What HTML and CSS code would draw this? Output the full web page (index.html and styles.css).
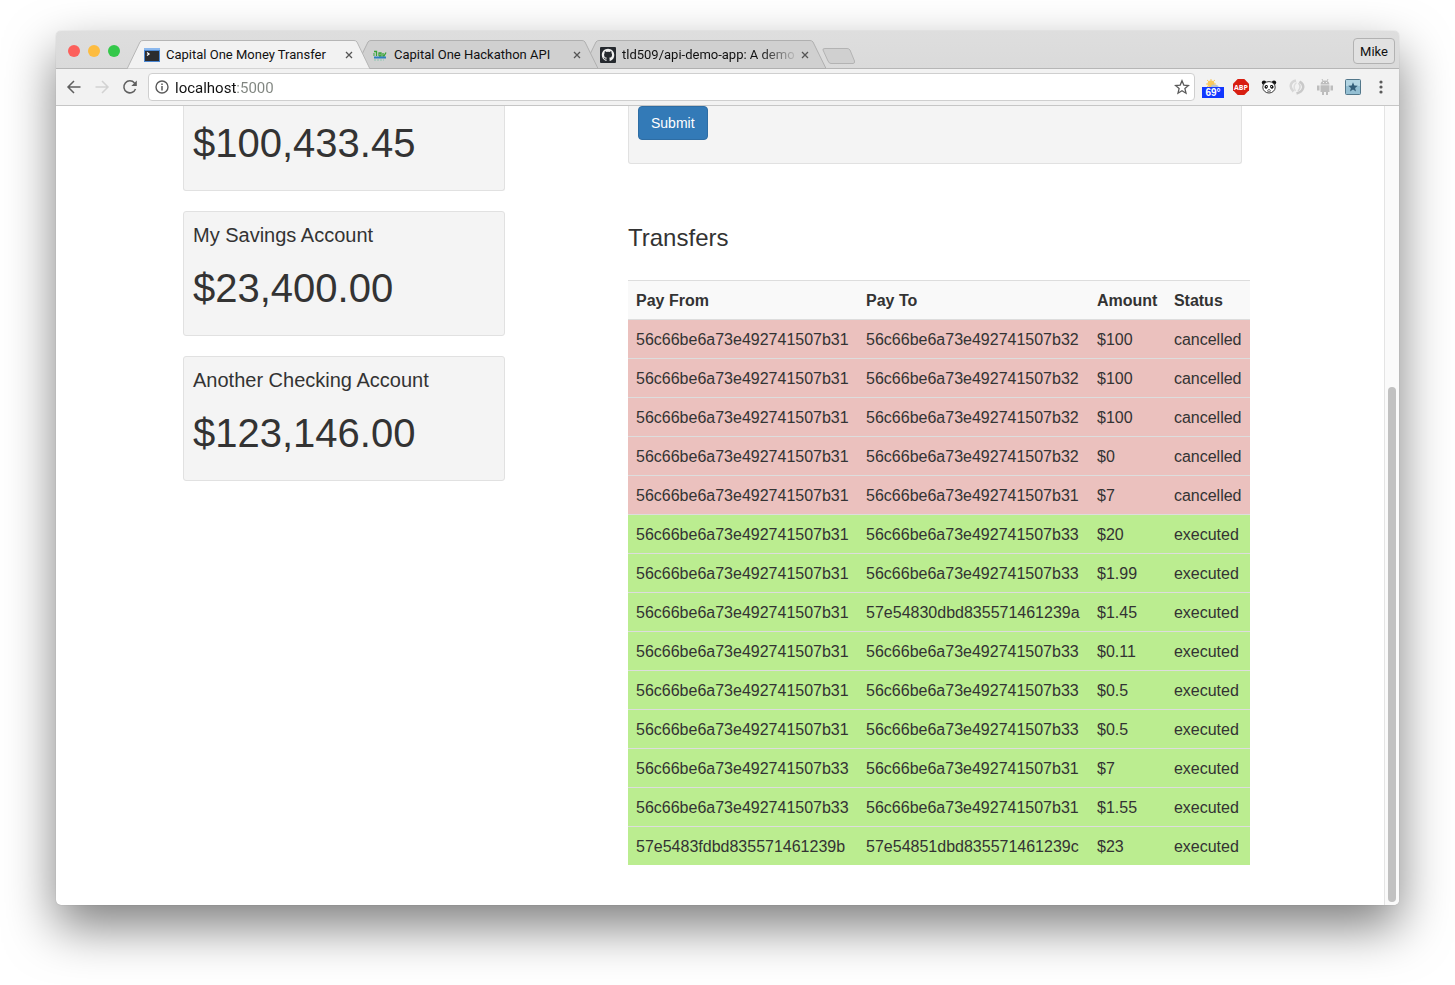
FILE: index.html
```html
<!DOCTYPE html>
<html lang="en">
<head>
<meta charset="utf-8">
<title>Capital One Money Transfer</title>
<link rel="stylesheet" href="styles.css">
</head>
<body>
<div class="window">
  <header class="tabstrip">
    <div class="lights">
      <button class="light light-close" aria-label="Close"></button>
      <button class="light light-min" aria-label="Minimize"></button>
      <button class="light light-max" aria-label="Zoom"></button>
    </div>
    <nav class="tabs">
      <div class="tab tab-active">
        <svg class="tab-shape" viewBox="0 0 243 29" preserveAspectRatio="none"><path d="M0 29L13 2Q14 .5 16 .5H227Q229 .5 230 2L243 29Z"/></svg>
        <div class="tab-body">
          <svg class="favicon" viewBox="0 0 16 16"><rect y="1" width="16" height="14" fill="#4b87d2"/><rect y="1" width="16" height="2" fill="#8bb8ee"/><rect x="1" y="4" width="14" height="10" fill="#2b2c30"/><path d="M3 5.500l2 1.500-2 1.500" fill="none" stroke="#fff" stroke-width="1.300"/></svg>
          <a class="tab-title" href="#">Capital One Money Transfer</a>
          <button class="tab-close" aria-label="Close tab"><svg viewBox="0 0 8 8"><path d="M1 1l6 6M7 1L1 7"/></svg></button>
        </div>
      </div>
      <div class="tab tab-second">
        <svg class="tab-shape" viewBox="0 0 243 29" preserveAspectRatio="none"><path d="M0 28.500L13 2Q14 .5 16 .5H227Q229 .5 230 2L243 28.500Z"/></svg>
        <div class="tab-body">
          <svg class="favicon" viewBox="0 0 16 16"><path d="M2 4.500h2.500V9M7 9V6h2v3H7M11 6v3h1l2-3.500" fill="none" stroke="#36a336" stroke-width="1.300"/><path d="M2 6v3" stroke="#36a336"/><path d="M2 10.500h12" stroke="#2e7fc0" stroke-width="1.800"/><path d="M2 13h10" stroke="#8dc6b0" stroke-dasharray="2 1"/></svg>
          <a class="tab-title" href="#">Capital One Hackathon API</a>
          <button class="tab-close" aria-label="Close tab"><svg viewBox="0 0 8 8"><path d="M1 1l6 6M7 1L1 7"/></svg></button>
        </div>
      </div>
      <div class="tab">
        <svg class="tab-shape" viewBox="0 0 243 29" preserveAspectRatio="none"><path d="M0 28.500L13 2Q14 .5 16 .5H227Q229 .5 230 2L243 28.500Z"/></svg>
        <div class="tab-body">
          <svg class="favicon" viewBox="0 0 16 16"><rect width="16" height="16" rx="1" fill="#25292e"/><path transform="translate(1.800 1.800) scale(.78)" fill="#eee" d="M8 0C3.580 0 0 3.580 0 8c0 3.540 2.290 6.530 5.470 7.590.4.070.550-.170.550-.380v-1.490c-2.010.370-2.530-.490-2.690-.940-.090-.230-.480-.940-.820-1.130-.280-.150-.680-.520-.010-.530.630-.010 1.080.580 1.230.820.720 1.210 1.870.870 2.330.660.070-.520.280-.870.510-1.070-1.780-.200-3.640-.890-3.640-3.950 0-.870.310-1.590.820-2.150-.080-.200-.360-1.020.080-2.120 0 0 .670-.210 2.200.820a7.400 7.400 0 0 1 4 0c1.530-1.040 2.200-.820 2.200-.820.440 1.100.160 1.920.080 2.120.510.560.820 1.270.820 2.150 0 3.070-1.870 3.750-3.650 3.950.290.250.540.730.540 1.480v2.190c0 .210.150.460.550.380A8 8 0 0 0 16 8c0-4.420-3.580-8-8-8z"/></svg>
          <a class="tab-title tab-title-fade" href="#">tld509/api-demo-app: A demo</a>
          <button class="tab-close" aria-label="Close tab"><svg viewBox="0 0 8 8"><path d="M1 1l6 6M7 1L1 7"/></svg></button>
        </div>
      </div>
      <button class="new-tab" aria-label="New tab"><svg viewBox="0 0 34 16"><path d="M3 .5H25Q27 .5 28 2L32.500 13Q33 15.500 31 15.500H9Q7 15.500 6 13L1 2Q.5 .5 3 .5Z" fill="#d0d0d0" stroke="#b3b3b3"/></svg></button>
    </nav>
    <button class="profile">Mike</button>
  </header>

  <div class="toolbar">
    <div class="nav-buttons">
      <button class="icon-btn" aria-label="Back"><svg viewBox="0 0 16 16"><path d="M14.500 8H2M8 2L2 8l6 6" fill="none" stroke="#5f5f5f" stroke-width="1.500"/></svg></button>
      <button class="icon-btn" aria-label="Forward" disabled><svg viewBox="0 0 16 16"><path d="M1.500 8H14M8 2l6 6-6 6" fill="none" stroke="#d2d2d2" stroke-width="1.500"/></svg></button>
      <button class="icon-btn" aria-label="Reload"><svg viewBox="0 0 16 16"><path d="M13.500 10A6 6 0 1 1 12.500 4" fill="none" stroke="#5f5f5f" stroke-width="1.500"/><path d="M14.800 1.500v5.500H9.300z" fill="#5f5f5f"/></svg></button>
    </div>
    <div class="address">
      <svg class="info" viewBox="0 0 14 14"><circle cx="7" cy="7" r="6" fill="none" stroke="#5a5a5a" stroke-width="1.400"/><path d="M7 6v4.500M7 3.400v1.500" stroke="#5a5a5a" stroke-width="1.500"/></svg>
      <input class="url" type="text" aria-label="Address" value="localhost:5000">
      <button class="icon-btn" aria-label="Bookmark"><svg viewBox="0 0 16 16"><path d="M8 1.800l1.800 4.300 4.700.4-3.600 3.100 1.100 4.600L8 11.700l-4 2.500 1.100-4.600L1.500 6.500l4.700-.4z" fill="none" stroke="#5a5a5a" stroke-width="1.300"/></svg></button>
    </div>
    <div class="extensions">
      <button class="icon-btn weather" aria-label="Weather"><svg viewBox="0 0 22 9"><circle cx="9" cy="6" r="3.500" fill="#f9c95c"/><path d="M9 1v8M4 6h10M5 2l8 7M13 2L5 9" stroke="#f9c95c"/><path d="M9 9c0-3 3-3 4-2 2-1 3 1 4 2z" fill="#b9c4cc"/></svg><span class="badge">69°</span></button>
      <button class="icon-btn" aria-label="Adblock Plus"><svg viewBox="0 0 16 16"><path d="M4.700 0h6.600L16 4.700v6.600L11.300 16H4.700L0 11.300V4.700z" fill="#d81e11"/><text class="abp" x="8" y="11" text-anchor="middle">ABP</text></svg></button>
      <button class="icon-btn" aria-label="Panda"><svg viewBox="0 0 16 16"><circle cx="3" cy="3.600" r="2.200" fill="#111"/><circle cx="13" cy="3.600" r="2.200" fill="#111"/><ellipse cx="8" cy="8.300" rx="6.200" ry="5.700" fill="#fff" stroke="#222" stroke-width=".9"/><ellipse cx="5.200" cy="7.800" rx="1.600" ry="1.900" fill="#111" transform="rotate(25 5.200 7.800)"/><ellipse cx="10.800" cy="7.800" rx="1.600" ry="1.900" fill="#111" transform="rotate(-25 10.800 7.800)"/><circle cx="5.500" cy="7.600" r=".6" fill="#fff"/><circle cx="10.500" cy="7.600" r=".6" fill="#fff"/><path d="M7 10h2l-1 1z" fill="#111"/><path d="M6 11.700q2 1.300 4 0" fill="none" stroke="#111" stroke-width=".7"/></svg></button>
      <button class="icon-btn" aria-label="Sync"><svg viewBox="0 0 16 16" fill="none"><path d="M7 1.500C1 3 0 8.500 4.500 12.500" stroke="#d6d6d6" stroke-width="2.500"/><path d="M7.500 3.500C4.500 6 4.500 9 6.500 12" stroke="#dedede" stroke-width="1.500"/><path d="M10.500 2.500C16.500 6 15 12.500 7.500 14.500" stroke="#c9c9c9" stroke-width="2.500"/><path d="M9.500 4C12 7 11.500 9.500 9 12" stroke="#d6d6d6" stroke-width="1.500"/></svg></button>
      <button class="icon-btn" aria-label="Android"><svg viewBox="0 0 16 16" fill="#bdbdbd"><path d="M3.500 5.500C3.500 0 12.500 0 12.500 5.500zM3.500 6.300h9V13h-9zM0 6.500h2.500v5H0zM13.500 6.500H16v5h-2.500zM5 13h2v3H5zM9 13h2v3H9z"/><path d="M5 0l1 2M11 0l-1 2" stroke="#bdbdbd"/><path d="M6 3.500h1M9 3.500h1" stroke="#f2f2f2"/></svg></button>
      <button class="icon-btn" aria-label="Star box"><svg viewBox="0 0 16 16"><rect x=".5" y=".5" width="15" height="15" rx="1" fill="#94bfd3" stroke="#52778a"/><path d="M1 1h14v6H1z" fill="#b3d5e3"/><path d="M8 3.200l1.300 3.300 3.500.2-2.700 2.200.9 3.500L8 10.500l-3 1.900.9-3.500-2.700-2.200 3.500-.2z" fill="#335d78"/></svg></button>
      <button class="icon-btn" aria-label="Menu"><svg viewBox="0 0 16 16" fill="#5a5a5a"><circle cx="8" cy="3" r="1.600"/><circle cx="8" cy="8" r="1.600"/><circle cx="8" cy="13" r="1.600"/></svg></button>
    </div>
  </div>

  <div class="viewport">
    <main class="page">
      <section class="accounts">
        <article class="well well-cut"><p class="balance">$100,433.45</p></article>
        <article class="well"><h4 class="account">My Savings Account</h4><p class="balance">$23,400.00</p></article>
        <article class="well"><h4 class="account">Another Checking Account</h4><p class="balance">$123,146.00</p></article>
      </section>
      <section class="activity">
        <form class="well well-cut"><button class="submit" type="button">Submit</button></form>
        <h3 class="heading">Transfers</h3>
        <table class="transfers">
          <thead><tr><th>Pay From</th><th>Pay To</th><th>Amount</th><th>Status</th></tr></thead>
          <tbody>
            <tr class="cancelled"><td>56c66be6a73e492741507b31</td><td>56c66be6a73e492741507b32</td><td>$100</td><td>cancelled</td></tr>
            <tr class="cancelled"><td>56c66be6a73e492741507b31</td><td>56c66be6a73e492741507b32</td><td>$100</td><td>cancelled</td></tr>
            <tr class="cancelled"><td>56c66be6a73e492741507b31</td><td>56c66be6a73e492741507b32</td><td>$100</td><td>cancelled</td></tr>
            <tr class="cancelled"><td>56c66be6a73e492741507b31</td><td>56c66be6a73e492741507b32</td><td>$0</td><td>cancelled</td></tr>
            <tr class="cancelled"><td>56c66be6a73e492741507b31</td><td>56c66be6a73e492741507b31</td><td>$7</td><td>cancelled</td></tr>
            <tr class="executed"><td>56c66be6a73e492741507b31</td><td>56c66be6a73e492741507b33</td><td>$20</td><td>executed</td></tr>
            <tr class="executed"><td>56c66be6a73e492741507b31</td><td>56c66be6a73e492741507b33</td><td>$1.99</td><td>executed</td></tr>
            <tr class="executed"><td>56c66be6a73e492741507b31</td><td>57e54830dbd835571461239a</td><td>$1.45</td><td>executed</td></tr>
            <tr class="executed"><td>56c66be6a73e492741507b31</td><td>56c66be6a73e492741507b33</td><td>$0.11</td><td>executed</td></tr>
            <tr class="executed"><td>56c66be6a73e492741507b31</td><td>56c66be6a73e492741507b33</td><td>$0.5</td><td>executed</td></tr>
            <tr class="executed"><td>56c66be6a73e492741507b31</td><td>56c66be6a73e492741507b33</td><td>$0.5</td><td>executed</td></tr>
            <tr class="executed"><td>56c66be6a73e492741507b33</td><td>56c66be6a73e492741507b31</td><td>$7</td><td>executed</td></tr>
            <tr class="executed"><td>56c66be6a73e492741507b33</td><td>56c66be6a73e492741507b31</td><td>$1.55</td><td>executed</td></tr>
            <tr class="executed"><td>57e5483fdbd835571461239b</td><td>57e54851dbd835571461239c</td><td>$23</td><td>executed</td></tr>
          </tbody>
        </table>
      </section>
    </main>
    <div class="scrollbar"><div class="thumb"></div></div>
  </div>
</div>
</body>
</html>
```
FILE: styles.css
```css
* { box-sizing: border-box; }
body { margin: 0; padding: 31px 56px 80px; background: #fff; color: #333; font: 16px/22px "Liberation Sans", Arial, sans-serif; }
button { margin: 0; padding: 0; border: 0; background: none; font: inherit; color: inherit; }
a { color: inherit; text-decoration: none; }
svg { display: block; }

.window { border-radius: 5px; background: #fff; overflow: hidden; box-shadow: 0 0 1px rgba(0,0,0,.3), 0 22px 50px rgba(0,0,0,.5); }

.tabstrip { display: flex; align-items: flex-end; height: 38px; padding: 0 4px 0 12px; background: linear-gradient(#dedede, #dadada); box-shadow: inset 0 -1px #b6b6b6; font: 13px/18px Roboto, sans-serif; color: #111; }
.lights { display: flex; gap: 8px; align-self: center; width: 59px; padding-top: 2px; }
.light { width: 12px; height: 12px; border-radius: 50%; }
.light-close { background: #fc605c; }
.light-min { background: #fdbc40; }
.light-max { background: #34c84a; }
.tabs { display: flex; flex: 1; align-items: flex-end; min-width: 0; }
.tab { display: grid; width: 243px; height: 29px; margin-right: -15px; }
.tab-active { z-index: 2; }
.tab-second { z-index: 1; }
.tab-shape { grid-area: 1 / 1; width: 100%; height: 29px; fill: #d0d0d0; stroke: #b0b0b0; }
.tab-active .tab-shape { fill: #f2f2f2; stroke: #b6b6b6; }
.tab-body { grid-area: 1 / 1; display: flex; align-items: center; min-width: 0; padding: 0 15px 0 17px; }
.favicon { flex: none; width: 16px; height: 16px; margin-right: 6px; }
.tab-title { flex: 1; min-width: 0; white-space: nowrap; }
.tab-title-fade { mask-image: linear-gradient(90deg, #000 78%, transparent); }
.tab-close { flex: none; width: 12px; height: 12px; padding: 2px; }
.tab-close svg { width: 8px; height: 8px; stroke: #555; stroke-width: 1.300; }
.new-tab { width: 34px; height: 16px; margin: 0 0 5px 11px; }
.new-tab svg { width: 34px; height: 16px; }
.profile { align-self: center; width: 42px; height: 26px; margin-top: 2px; padding-top: 2px; border: 1px solid #b2b2b2; border-radius: 4px; background: #e1e1e1; }

.toolbar { display: flex; align-items: center; height: 37px; padding: 0 10px; background: #f2f2f2; border-bottom: 1px solid #c6c6c6; }
.nav-buttons { display: flex; gap: 12px; padding-right: 10px; }
.icon-btn { flex: none; width: 16px; height: 16px; }
.icon-btn svg { width: 16px; height: 16px; }
.address { display: flex; flex: 1; align-items: center; gap: 6px; height: 28px; padding: 0 4px 0 6px; border: 1px solid #cfcfcf; border-radius: 4px; background: #fff; }
.info { width: 14px; height: 14px; }
/* The host is dark and the port grey: the text is painted with a two-tone background. */
.url { flex: 1; min-width: 0; height: 22px; padding: 1px 0 0; border: 0; outline: 0; font: 15px/20px Roboto, sans-serif; color: transparent; caret-color: #111; background: linear-gradient(90deg, #111 61px, #808580 61px); background-clip: text; -webkit-background-clip: text; }
.extensions { display: flex; align-items: center; gap: 12px; padding-left: 7px; }
.icon-btn.weather { width: 22px; height: 22px; margin-right: -3px; padding-top: 2px; }
.icon-btn.weather svg { width: 22px; height: 9px; }
.badge { display: block; height: 11px; background: #1238ff; color: #fff; font: bold 10px/12px "Liberation Sans", sans-serif; text-align: center; }
.abp { fill: #fff; font: bold 7px "Open Sans", sans-serif; }

.viewport { display: flex; }
.page { display: grid; flex: 1; grid-template-columns: 322fr 614fr; gap: 123px; align-items: start; min-width: 0; padding: 0 142px 40px 127px; }
.accounts, .activity { min-width: 0; }
.well { margin: 0 0 20px; padding: 9px; border: 1px solid #e1e1e1; border-radius: 3px; background: #f4f4f4; }
.well-cut { padding-top: 0; border-top: 0; border-radius: 0 0 3px 3px; }
.account { margin: 0 0 17px; font-size: 20px; font-weight: 400; line-height: 28px; }
.balance { margin: 0; padding-bottom: 16px; font-size: 40px; line-height: 44px; }
.well-cut .balance { padding-top: 15px; }
.submit { display: block; height: 34px; margin-bottom: 14px; padding: 0 12px; border: 1px solid #2e6da4; border-radius: 4px; background: #337ab7; color: #fff; font-size: 14px; }
.heading { margin: 60px 0 28px; font-size: 24px; font-weight: 400; line-height: 28px; }
.transfers { min-width: calc(100% + 8px); border-collapse: collapse; white-space: nowrap; }
.transfers th, .transfers td { padding: 9px 8px 7px; border-top: 1px solid #ddd; text-align: left; }
.transfers thead { background: #f9f9f9; }
.cancelled { background: #ebc1be; }
.executed { background: #bbed90; }

.scrollbar { display: flex; flex-direction: column; justify-content: flex-end; width: 15px; padding: 3px; border-left: 1px solid #e4e4e4; background: #fafafa; }
.thumb { width: 8px; height: 65%; border-radius: 4px; background: #c1c1c1; }
```
